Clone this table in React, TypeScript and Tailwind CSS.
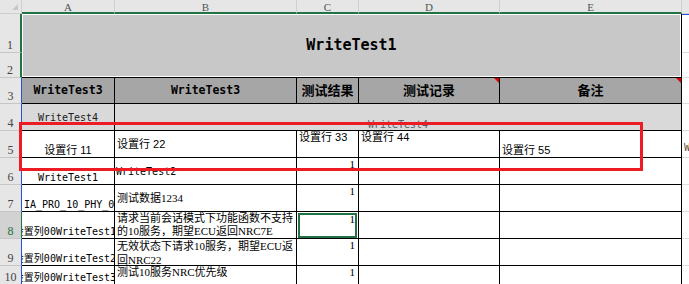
import React from 'react';

const mono = "font-['DejaVu_Sans_Mono','Noto_Sans_CJK_SC',monospace]";
const sans = "font-['Liberation_Sans','Noto_Sans_CJK_SC',sans-serif]";
const serif = "font-['Liberation_Serif','Noto_Sans_CJK_SC',serif]";

const cell = 'flex min-w-0 overflow-hidden whitespace-nowrap border-r border-b border-black';
const head = `${cell} bg-[#a6a6a6] items-center justify-center font-bold text-black`;

function ColHead({ label }: { label: string }) {
  return (
    <div
      className={`${serif} flex justify-center pt-[1px] text-[11px] leading-[12px] text-[#4b5754] bg-[#e6e6e6] border-r border-r-[#d0d0d0] border-b-2 border-b-[#217346]`}
    >
      {label}
    </div>
  );
}

function RowHead({ n, edge, active }: { n: number; edge: string; active?: boolean }) {
  return (
    <div
      className={`${serif} flex items-end justify-center pb-[1px] text-[12px] leading-[12px] border-b border-b-[#c6c6c6] ${edge} ${
        active ? 'bg-[#d2d2d2] text-[#217346]' : 'bg-[#e6e6e6] text-[#444]'
      }`}
    >
      {n}
    </div>
  );
}

function Flag() {
  return (
    <span className="absolute top-0 right-0 w-0 h-0 border-l-[5px] border-l-transparent border-t-[5px] border-t-[#e00000]" />
  );
}

function One() {
  return <span className={`${serif} text-[11px] leading-[13px] text-black`}>1</span>;
}

const blue = 'border-r border-r-[#2d4fd6]';
const fcell = 'bg-white border-b border-b-[#dcdcdc]';

export default function App() {
  return (
    <div className="relative w-[689px] h-[284px] overflow-hidden bg-white">
      <div className="grid grid-cols-[22px_93px_182px_62px_141px_182px_1fr] grid-rows-[14px_39px_25px_26px_27px_27px_27px_27px_27px_27px_19px]">
        {/* column letters */}
        <div className="relative bg-[#e6e6e6] border-r border-b border-[#cfcfcf]">
          <span className="absolute right-[3px] bottom-[3px] w-0 h-0 border-l-[6px] border-l-transparent border-b-[6px] border-b-[#c6c6c6]" />
        </div>
        {['A', 'B', 'C', 'D', 'E'].map((c) => (
          <ColHead key={c} label={c} />
        ))}
        <div className="bg-[#e6e6e6] border-b border-b-[#cfcfcf]" />

        {/* rows 1-2: merged title */}
        <RowHead n={1} edge="border-r-2 border-r-[#217346]" />
        <div className="col-span-5 row-span-2 flex items-center justify-center bg-[#c8c8c8] border-r border-b border-black shadow-[inset_0_0_0_1px_#fff]">
          <span className={`${mono} font-bold text-[15px] text-black`}>WriteTest1</span>
        </div>
        <div className={`${fcell} border-t border-t-[#2d4fd6]`} />
        <RowHead n={2} edge="border-r-2 border-r-[#217346]" />
        <div className={fcell} />

        {/* row 3: headings */}
        <RowHead n={3} edge={blue} />
        <div className={`${head} ${mono} text-[11.5px]`}>WriteTest3</div>
        <div className={`${head} ${mono} text-[11.5px]`}>WriteTest3</div>
        <div className={`${head} ${sans} text-[13px]`}>测试结果</div>
        <div className={`${head} ${sans} text-[13px] relative`}>
          测试记录
          <Flag />
        </div>
        <div className={`${head} ${sans} text-[13px] relative`}>
          备注
          <Flag />
        </div>
        <div className={fcell} />

        {/* row 4 */}
        <RowHead n={4} edge={blue} />
        <div className={`${cell} bg-[#d9d9d9] items-center justify-center ${mono} text-[10px] text-[#1a1a1a]`}>
          WriteTest4
        </div>
        <div className={`${cell} col-span-4 bg-[#d9d9d9] items-end justify-center ${mono} text-[10px] leading-[10px] text-[#56606a]`}>
          WriteTest4
        </div>
        <div className={fcell} />

        {/* row 5 */}
        <RowHead n={5} edge={blue} />
        <div className={`${cell} items-end justify-center ${sans} text-[11px] leading-[13px]`}>设置行 11</div>
        <div className={`${cell} items-center pl-[2px] ${sans} text-[11px] leading-[13px]`}>设置行 22</div>
        <div className={`${cell} items-start pl-[2px] ${sans} text-[11px] leading-[13px]`}>设置行 33</div>
        <div className={`${cell} items-start pl-[2px] ${sans} text-[11px] leading-[13px]`}>设置行 44</div>
        <div className={`${cell} items-end pl-[2px] ${sans} text-[11px] leading-[13px]`}>设置行 55</div>
        <div className={`${fcell} flex items-end overflow-hidden whitespace-nowrap pl-[2px] pb-[2px] ${mono} text-[10px] text-[#5a5040]`}>
          WriteTest5
        </div>

        {/* row 6 */}
        <RowHead n={6} edge={blue} />
        <div className={`${cell} items-end justify-center pb-[1px] ${mono} text-[10px] leading-[11px]`}>WriteTest1</div>
        <div className={`${cell} items-center pl-[1px] ${mono} text-[10px]`}>WriteTest2</div>
        <div className={`${cell} items-start justify-end pr-[3px]`}>
          <One />
        </div>
        <div className={cell} />
        <div className={cell} />
        <div className={fcell} />

        {/* row 7 */}
        <RowHead n={7} edge={blue} />
        <div className={`${cell} items-end pl-[2px] pb-[1px] ${mono} text-[10px] leading-[11px]`}>IA_PRO_10_PHY_001</div>
        <div className={`${cell} items-center pl-[2px] ${serif} text-[11px] leading-[13px]`}>测试数据1234</div>
        <div className={`${cell} items-start justify-end pr-[3px]`}>
          <One />
        </div>
        <div className={cell} />
        <div className={cell} />
        <div className={fcell} />

        {/* row 8 */}
        <RowHead n={8} edge="border-r border-r-[#217346]" active />
        <div className={`${cell} items-end justify-center pb-[1px] ${mono} text-[10px] leading-[11px]`}>设置列00WriteTest10</div>
        <div className={`${cell} flex-col pl-[2px] ${serif} text-[11px] leading-[13px]`}>
          <span>请求当前会话模式下功能函数不支持</span>
          <span>的10服务，期望ECU返回NRC7E</span>
        </div>
        <div className={`${cell} relative items-start justify-end pr-[3px] pt-[1px]`}>
          <One />
          <span className="absolute left-[1px] top-[1px] right-[1px] bottom-0 border-2 border-[#217346]" />
        </div>
        <div className={cell} />
        <div className={cell} />
        <div className={fcell} />

        {/* row 9 */}
        <RowHead n={9} edge={blue} />
        <div className={`${cell} items-end justify-center pb-[1px] ${mono} text-[10px] leading-[11px]`}>设置列00WriteTest20</div>
        <div className={`${cell} flex-col pl-[2px] ${serif} text-[11px] leading-[14px]`}>
          <span>无效状态下请求10服务，期望ECU返</span>
          <span>回NRC22</span>
        </div>
        <div className={`${cell} items-start justify-end pr-[3px]`}>
          <One />
        </div>
        <div className={cell} />
        <div className={cell} />
        <div className={fcell} />

        {/* row 10 */}
        <RowHead n={10} edge={blue} />
        <div className={`${cell} items-end justify-center pb-[1px] ${mono} text-[10px] leading-[11px]`}>设置列00WriteTest30</div>
        <div className={`${cell} items-start pl-[2px] ${serif} text-[11px] leading-[13px]`}>测试10服务NRC优先级</div>
        <div className={`${cell} items-start justify-end pr-[3px]`}>
          <One />
        </div>
        <div className={cell} />
        <div className={cell} />
        <div className={fcell} />
      </div>

      {/* red annotation box */}
      <div className="absolute left-[19px] top-[122px] w-[624px] h-[49px] border-[3px] border-[#ed1c24]" />
    </div>
  );
}
